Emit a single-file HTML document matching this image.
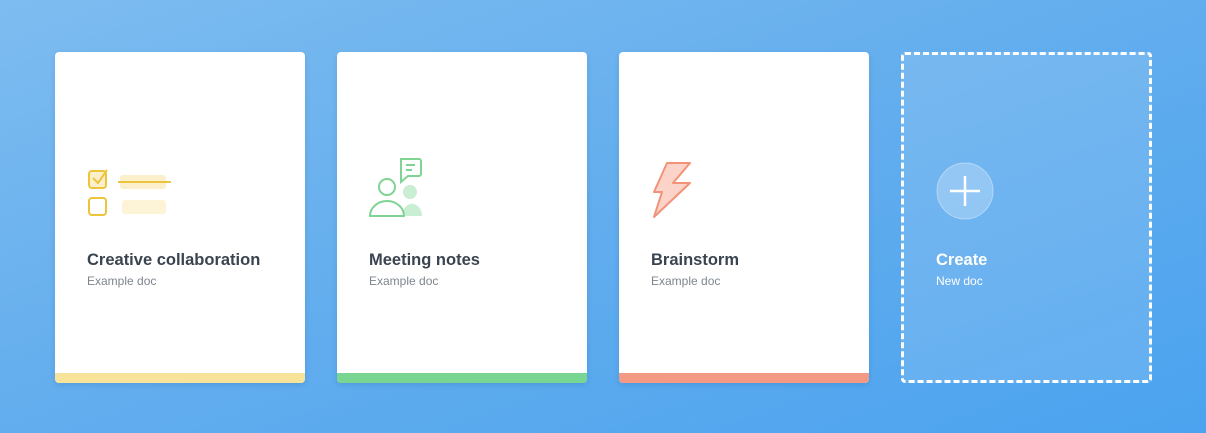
<!DOCTYPE html><html><head><style>
body{margin:0;width:1206px;height:433px;overflow:hidden;background:linear-gradient(160deg,#7dbcf0 0%,#62adee 50%,#4ba3ef 100%);font-family:"Liberation Sans",sans-serif}
.c{position:absolute;top:52px;width:250px;height:331px;background:#fff;border-radius:4px;overflow:hidden;box-shadow:0 2px 6px rgba(0,60,120,.15)}
.c .b{position:absolute;left:0;right:0;bottom:0;height:10px}
.t{position:absolute;left:32px;top:199px;font-size:16.5px;font-weight:bold;color:#3a4450}
.s{position:absolute;left:32px;top:222px;font-size:12px;color:#7d858e}
svg{position:absolute}
.n{position:absolute;left:901px;top:52px;width:245px;height:325px;border:3px dashed #fff;border-radius:4px;background:rgba(255,255,255,.12)}
</style></head><body>
<div class="c" style="left:55px"><svg style="left:30px;top:112px" width="90" height="55">
<rect x="35" y="11" width="46" height="14" rx="3" fill="#fbf0cb"/><rect x="37" y="36" width="44" height="14" rx="3" fill="#fdf3d6"/>
<rect x="4" y="7" width="17" height="17" rx="3" fill="#fbf0cb" stroke="#ecc53c" stroke-width="2"/><path d="M8 14l5 5 9-13" fill="none" stroke="#ecc53c" stroke-width="2"/>
<rect x="4" y="34" width="17" height="17" rx="3" fill="none" stroke="#ecc53c" stroke-width="2"/>
<line x1="33" y1="18" x2="86" y2="18" stroke="#ecc53c" stroke-width="2"/></svg>
<div class="t">Creative collaboration</div><div class="s">Example doc</div><div class="b" style="background:#f8e39b"></div></div>
<div class="c" style="left:337px"><svg style="left:30px;top:104px" width="65" height="62">
<circle cx="43" cy="36" r="7" fill="#c9eed3"/><path d="M35 60a9 11 0 0 1 20 0z" fill="#c9eed3"/>
<path d="M34 3h18a2 2 0 0 1 2 2v13a2 2 0 0 1-2 2h-11l-7 6z" fill="#fff" stroke="#7fd494" stroke-width="2"/>
<path d="M39 9h9M39 14h6" stroke="#7fd494" stroke-width="2"/>
<circle cx="20" cy="31" r="8" fill="#fff" stroke="#7fd494" stroke-width="2"/>
<path d="M3 60a17 15 0 0 1 34 0z" fill="#fff" stroke="#7fd494" stroke-width="2"/></svg>
<div class="t">Meeting notes</div><div class="s">Example doc</div><div class="b" style="background:#79d592"></div></div>
<div class="c" style="left:619px"><svg style="left:30px;top:108px" width="45" height="62">
<path d="M18 3h23L24 23h17L5 57l8-25H5z" fill="#fcd3c8" stroke="#f29277" stroke-width="2" stroke-linejoin="round"/></svg>
<div class="t">Brainstorm</div><div class="s">Example doc</div><div class="b" style="background:#f39a85"></div></div>
<div class="n"><svg style="left:31px;top:106px" width="60" height="60"><circle cx="30" cy="30" r="28" fill="rgba(255,255,255,.25)" stroke="rgba(255,255,255,.4)"/><path d="M30 15v30M15 30h30" stroke="#fff" stroke-width="2.5"/></svg>
<div class="t" style="color:#fff;left:32px;top:196px">Create</div><div class="s" style="color:#fff;left:32px;top:219px">New doc</div></div>
</body></html>
